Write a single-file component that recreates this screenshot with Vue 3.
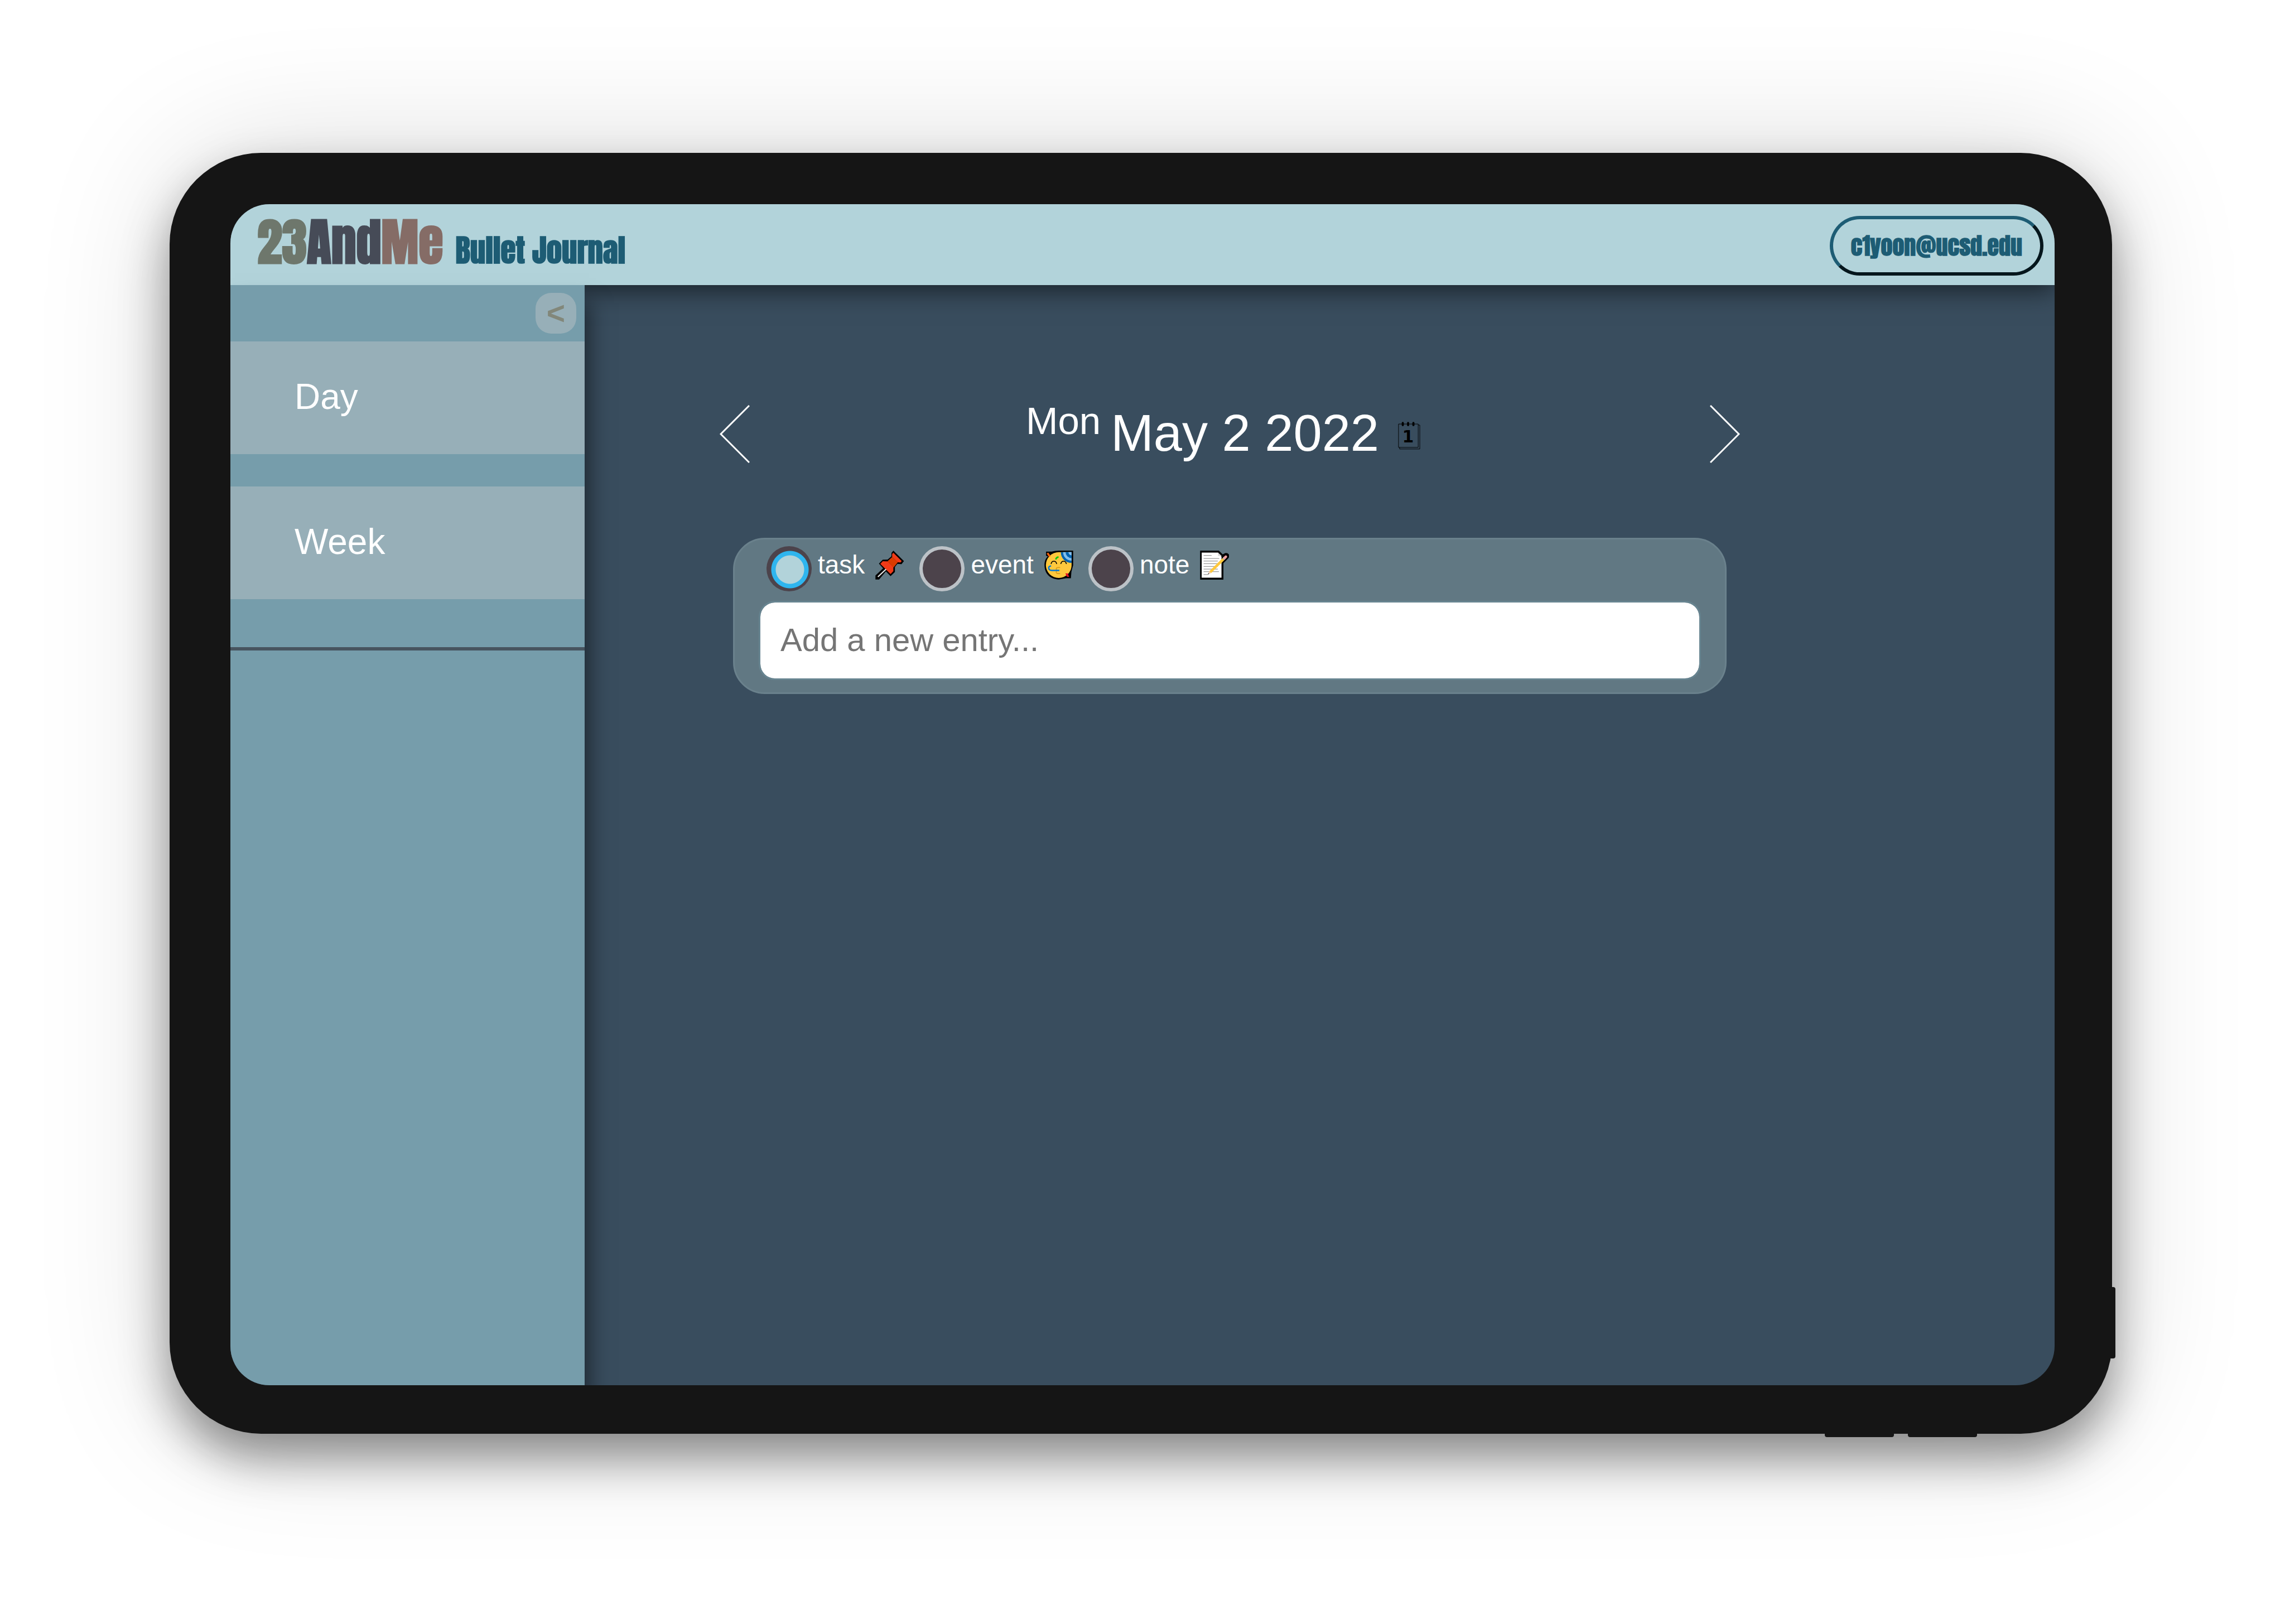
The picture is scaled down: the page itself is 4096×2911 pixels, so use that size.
<script setup>
import { ref } from 'vue'

const views = ['Day', 'Week']
const kinds = ['task', 'event', 'note']
const kind = ref('task')
const entry = ref('')
</script>

<template>
  <div class="stage">
    <div class="device">
      <span class="key key-side"></span>
      <span class="key key-left"></span>
      <span class="key key-right"></span>
      <div class="screen">
        <header class="topbar">
          <h1 class="brand">
            <span class="logo"><span class="c-num">23</span><span class="c-and">And</span><span class="c-me">Me</span></span>
            <span class="sub">Bullet Journal</span>
          </h1>
          <button class="account" type="button">c1yoon@ucsd.edu</button>
        </header>
        <div class="body">
          <aside class="sidebar">
            <div class="collapse-row">
              <button class="collapse" type="button" aria-label="Collapse sidebar">&lt;</button>
            </div>
            <nav class="views">
              <a v-for="v in views" :key="v" class="view" href="#">{{ v }}</a>
            </nav>
          </aside>
          <main class="main">
            <div class="daynav">
              <button class="arrow" type="button" aria-label="Previous day">
                <svg viewBox="0 0 54 104"><path d="M53 1 2 52l51 51" /></svg>
              </button>
              <h2 class="date">
                <span class="weekday">Mon</span>
                <span class="fulldate">May 2 2022</span>
                <button class="calendar" type="button" aria-label="Pick a date">
                  <svg viewBox="0 0 42 52">
                    <path d="M1 4h37v44H1zM38 6h3v45H3v-3" fill="none" stroke="#000" />
                    <path d="M9 2v4M19 2v4M29 2v4" stroke="#000" stroke-width="4" stroke-linecap="round" />
                    <text x="19" y="39" text-anchor="middle">1</text>
                  </svg>
                </button>
              </h2>
              <button class="arrow" type="button" aria-label="Next day">
                <svg viewBox="0 0 54 104"><path d="m1 1 51 51L1 103" /></svg>
              </button>
            </div>

            <form class="entry" @submit.prevent>
              <div class="kinds">
                <div v-for="k in kinds" :key="k" class="kind">
                  <input :id="k" v-model="kind" type="radio" name="kind" :value="k" />
                  <label :for="k">
                    {{ k }}
                    <svg v-if="k === 'task'" viewBox="0 0 165 167">
                      <path d="M103 0l61 60-14 18-24-2-14 18v29l-25 24-27-27-39 46H0v-23l44-41-24-27 22-23 28-1 22-18V14z" />
                      <path d="M103 12l48 48-7 8-16-1-32-31V19zM42 61l28 1 33 33v23l-16 17-59-59z" fill="#f03a17" />
                      <path d="M97 36l32 31-25 30-35-35z" fill="#da3b01" />
                      <path d="M14 151l47-44" stroke="#e8e8e8" stroke-width="7" />
                    </svg>
                    <svg v-else-if="k === 'event'" viewBox="0 0 165 167">
                      <path d="M9 6h32l20-4 22-2h82v84l-10 37-3 38h-28l-42 7C30 164 0 130 0 83c0-24 8-40 20-50L9 30z" />
                      <path d="M82 9h74v74a74 74 0 1 1-74-74z" fill="#ffc83d" />
                      <path d="M94 9h62v62a62 62 0 0 1-62-62z" fill="#0063b1" />
                      <path d="M107 9h49v49a49 49 0 0 1-49-49z" fill="#83beec" />
                      <path d="M122 9h34v34a34 34 0 0 1-34-34z" fill="#0063b1" />
                      <path d="M138 9h18v18a18 18 0 0 1-18-18z" fill="#83beec" />
                      <path d="M17 14l14 20" stroke="#f7630c" stroke-width="11" />
                      <path d="M120 131h14l8 20-12-1z" fill="#e81224" />
                      <path d="M65 51q3-13 16-14" fill="none" stroke="#16c60c" stroke-width="9" />
                      <path d="M38 77q2-16 16-16t16 16M94 77q2-16 16-16t16 16" fill="none" stroke="#000" stroke-width="5" />
                      <path d="M90 97H78c-14 0-14 17 0 17h8M78 115c-14 0-14 17 0 17h12" fill="none" stroke="#d69a17" stroke-width="5" />
                      <path d="M86 114H42c-22 0-24-26-4-26" fill="none" stroke="#0078d7" stroke-width="8" />
                    </svg>
                    <svg v-else viewBox="0 0 165 167">
                      <path d="M0 0h108l22 22 8-4a17 17 0 0 1 24 26l-28 28v95H0z" />
                      <path d="M9 11h94l20 25v120H9z" fill="#fff" />
                      <path d="M103 11v20h22z" fill="#d8d8d8" />
                      <path d="M20 28h46M20 45h90M20 60h82M20 75h92M20 91h82M20 106h82M20 121h88M20 138h24l6-4" fill="none" stroke="#9a9a9a" stroke-width="4" />
                      <path d="M58 124l76-75" stroke="#ffc83d" stroke-width="15" />
                      <path d="M134 49l8-8" stroke="#c8c8c8" stroke-width="15" />
                      <path d="M141 42l7-7" stroke="#f0a0a0" stroke-width="15" stroke-linecap="round" />
                      <path d="M53 118l11 11-19 6z" fill="#f5cfae" />
                      <path d="M48 128l5 5-8 3z" fill="#555" />
                    </svg>
                  </label>
                </div>
              </div>
              <input v-model="entry" class="text" type="text" aria-label="New entry" placeholder="Add a new entry..." />
            </form>
          </main>
        </div>
      </div>
    </div>
  </div>
</template>

<style>
body {
  margin: 0;
  background: #fff;
}
</style>

<style scoped>
* {
  box-sizing: border-box;
}
.stage {
  display: flex;
  min-height: 100vh;
  padding: 274px 310px 341px 304px;
  overflow: hidden;
  background: #fff;
  font-family: "Liberation Sans", Arial, sans-serif;
}
.device {
  position: relative;
  display: flex;
  flex: 1;
  padding: 92px 103px 87px 109px;
  border-radius: 164px;
  background: #151515;
  box-shadow: 0 44px 84px rgba(0, 0, 0, 0.42), 0 0 240px rgba(0, 0, 0, 0.15);
}
.key {
  position: absolute;
  border-radius: 4px;
  background: #151515;
}
.key-side {
  right: -6px;
  bottom: 135px;
  width: 12px;
  height: 128px;
}
.key-left,
.key-right {
  bottom: -6px;
  width: 124px;
  height: 12px;
}
.key-left {
  right: 391px;
}
.key-right {
  right: 242px;
}
.screen {
  display: flex;
  flex: 1;
  flex-direction: column;
  overflow: hidden;
  border-radius: 70px;
  background: #394d5e;
}
button {
  margin: 0;
  padding: 0;
  border: 0;
  background: none;
  font-family: inherit;
}
svg {
  display: block;
}
.topbar {
  position: relative;
  z-index: 1;
  display: flex;
  align-items: flex-start;
  justify-content: space-between;
  height: 145px;
  padding: 21px 20px 0 48px;
  background: #b2d3da;
  box-shadow: 0 8px 44px rgba(0, 0, 0, 0.6);
  font-family: Impact, Anton, "Roboto Condensed", "Open Sans Condensed", Roboto, "Liberation Sans", sans-serif;
}
.brand {
  display: flex;
  align-items: baseline;
  gap: 22px;
  margin: 0;
  line-height: 95px;
  font-weight: 900;
}
.logo {
  font-size: 90px;
}
.c-num {
  color: #6e776c;
}
.c-and {
  color: #464b57;
}
.c-me {
  color: #856c66;
}
.sub {
  color: #1d5c74;
  font-size: 55px;
}
.account {
  height: 107px;
  padding: 0 32px;
  border: 6px solid;
  border-color: #1d5c74 #05161c #05161c #1d5c74;
  border-radius: 54px;
  color: #1d5c74;
  font-size: 42px;
  font-weight: 900;
}
.body {
  display: flex;
  flex: 1;
}
.sidebar {
  position: relative;
  z-index: 2;
  width: 635px;
  background: #769dab;
  box-shadow: 8px 32px 36px rgba(0, 0, 0, 0.5);
}
.collapse-row {
  display: flex;
  justify-content: flex-end;
  padding: 14px 15px;
}
.collapse {
  width: 73px;
  height: 73px;
  border-radius: 28px;
  background: #97afb8;
  color: #82877a;
  font-size: 57px;
  font-weight: 700;
  line-height: 65px;
}
.views {
  display: flex;
  flex-direction: column;
  gap: 58px;
  padding-bottom: 86px;
  border-bottom: 6px solid #47545f;
}
.view {
  padding: 0 115px 4px;
  background: #97afb8;
  color: #fff;
  font-size: 64px;
  line-height: 198px;
  text-decoration: none;
}
.main {
  flex: 1;
  padding: 215px 564px 0 242px;
}
.daynav {
  display: flex;
  justify-content: space-between;
  height: 104px;
}
.arrow svg {
  width: 54px;
  height: 104px;
  fill: none;
  stroke: #fff;
  stroke-width: 3;
}
.date {
  display: flex;
  align-items: flex-start;
  margin: 0;
  color: #fff;
  font-weight: 400;
}
.weekday {
  margin-right: 18px;
  font-size: 69px;
  line-height: 58px;
}
.fulldate {
  font-size: 92px;
  line-height: 100px;
}
.calendar {
  padding: 30px 24px 0 34px;
}
.calendar svg {
  width: 40px;
  height: 50px;
}
.calendar text {
  font: 700 31px "DejaVu Sans", sans-serif;
}
.entry {
  margin: 134px 24px 0;
  padding: 12px 46px 25px;
  border: 3px solid #6a818c;
  border-radius: 57px;
  background: #617883;
}
.kinds {
  display: flex;
  gap: 27px;
  margin-bottom: 20px;
  padding-left: 11px;
}
.kind {
  display: flex;
  align-items: flex-start;
  gap: 11px;
}
.kind input {
  width: 81px;
  height: 81px;
  margin: 0;
  border: 6px solid #bcc2c7;
  border-radius: 50%;
  background: #4c434b;
  appearance: none;
}
.kind input:checked {
  border: 0;
  background: radial-gradient(circle at 42px 42px, #b2d3da 25px, #2fb5ee 26px, #2fb5ee 33px, #4c434b 34px);
}
.kind label {
  display: flex;
  align-items: center;
  gap: 19px;
  color: #fff;
  font-size: 46px;
  line-height: 67px;
}
.kind svg {
  width: 52px;
  height: 52px;
}
.text {
  display: block;
  width: 100%;
  height: 136px;
  padding: 0 36px 4px;
  border: 0;
  border-radius: 26px;
  outline: 3px solid #678490;
  background: #fff;
  color: #222;
  font-family: inherit;
  font-size: 58px;
}
.text::placeholder {
  color: #757575;
  opacity: 1;
}
</style>
